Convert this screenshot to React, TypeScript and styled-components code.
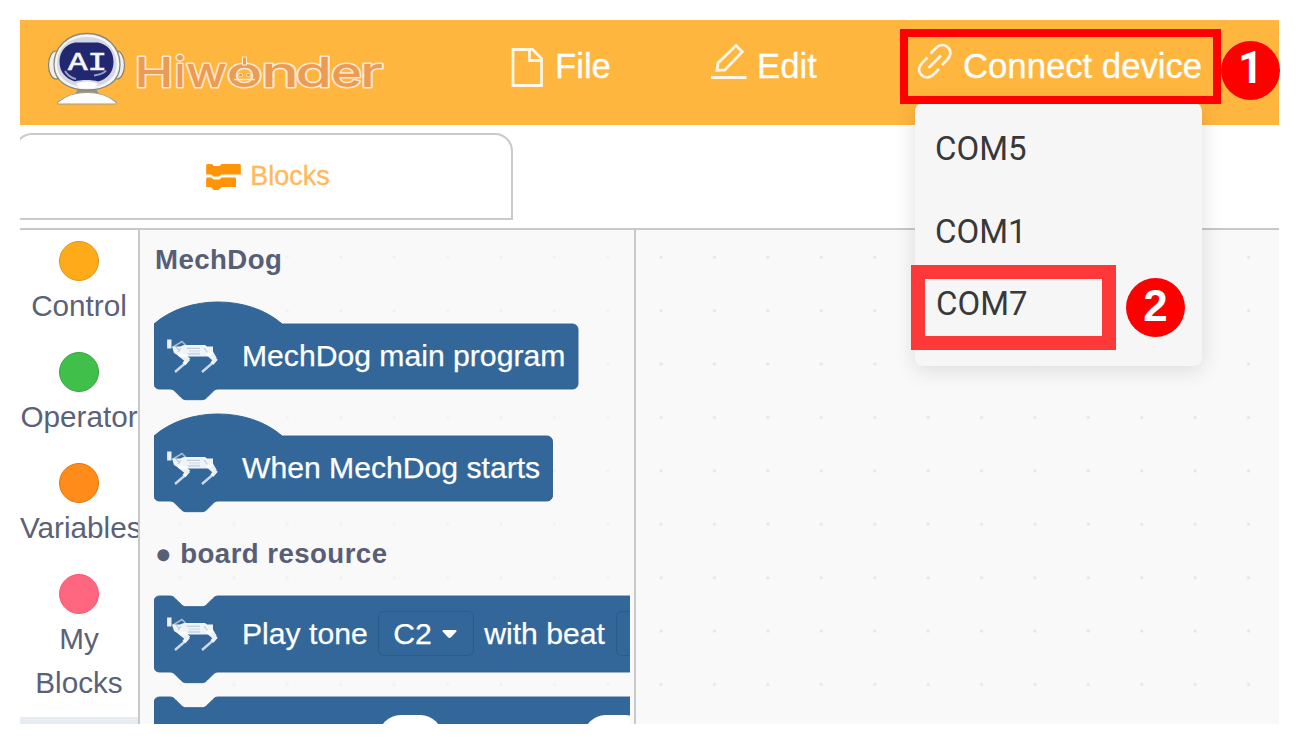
import React from 'react';
import styled, { createGlobalStyle } from 'styled-components';

const GlobalStyle = createGlobalStyle`
  *, *::before, *::after { box-sizing: border-box; }
  body { margin: 0; background: #fff; font-family: "Liberation Sans", Arial, sans-serif; }
`;

const Page = styled.div`
  width: 1301px;
  height: 744px;
  padding: 20px 22px 20px 20px;
  overflow: hidden;
`;

const Window = styled.div`
  position: relative;
  display: flex;
  flex-direction: column;
  width: 1259px;
  height: 704px;
  background: #fff;
`;

const Header = styled.header`
  display: flex;
  align-items: flex-start;
  height: 105px;
  flex: none;
  background: #ffb63f;
`;

const Logo = styled.svg`
  display: block;
  flex: none;
  width: 350px;
  height: 96px;
  margin-left: 25px;
`;

const Menu = styled.nav`
  display: flex;
  padding-top: 20px;
  margin-left: 113px;
`;

const MenuItem = styled.div<{ $width: number }>`
  display: flex;
  flex: none;
  width: ${p => p.$width}px;
  height: 54px;
  color: #fff;
  font-size: 34.7px;
  line-height: 52px;
  white-space: nowrap;
  -webkit-text-stroke: 0.3px #fff;
`;

const MenuIcon = styled.svg<{ $w: number }>`
  flex: none;
  width: ${p => p.$w}px;
  height: 54px;
`;

const TabBar = styled.div`
  height: 103px;
  flex: none;
  padding-top: 8px;
  overflow: hidden;
`;

const Tab = styled.div`
  display: flex;
  align-items: center;
  justify-content: center;
  gap: 9px;
  width: 499px;
  height: 87px;
  margin-left: -6px;
  padding-left: 9px;
  border: 2px solid #cacaca;
  border-radius: 18px 18px 0 0;
  color: #ffb95a;
  font-size: 27px;
  -webkit-text-stroke: 0.3px #ffb95a;
`;

const Body = styled.div`
  display: flex;
  flex: 1;
  min-height: 0;
  border-top: 2px solid #c8c8c8;
`;

const Sidebar = styled.aside`
  width: 120px;
  flex: none;
  overflow: hidden;
  border-right: 2px solid #c9c9c9;
`;

const Category = styled.div<{ $active?: boolean }>`
  display: flex;
  flex-direction: column;
  min-height: 111px;
  padding: 11px 0 13px;
  background: ${p => (p.$active ? '#e6ecf1' : 'transparent')};
`;

const Bubble = styled.span<{ $fill: string; $edge: string }>`
  width: 40px;
  height: 40px;
  margin: 0 auto 3px 39px;
  border: 1.5px solid ${p => p.$edge};
  border-radius: 50%;
  background: ${p => p.$fill};
`;

const CategoryName = styled.span`
  color: #5b6178;
  font-size: 29.7px;
  line-height: 43.5px;
  text-align: center;
`;

const Workspace = styled.main`
  position: relative;
  display: flex;
  flex: 1;
  min-width: 0;
  background: #f9f9f9;
`;

const Grid = styled.svg`
  position: absolute;
  inset: 0;
  width: 100%;
  height: 100%;
`;

const Flyout = styled.section`
  position: relative;
  width: 496px;
  flex: none;
  overflow: hidden;
  padding: 8px 4px 0 14px;
  border-right: 2px solid #c9c9c9;
`;

const FlyoutClip = styled.div`
  height: 100%;
  overflow: hidden;
`;

const Label = styled.h2<{ $gap: number }>`
  display: flex;
  margin: 0 0 ${p => p.$gap}px 1px;
  height: 44px;
  color: #575e75;
  font-size: 27.6px;
  line-height: 44px;
  letter-spacing: 0.45px;
  white-space: nowrap;
`;

const BlockRow = styled.div<{ $h: number; $gap: number }>`
  position: relative;
  display: flex;
  align-items: center;
  height: ${p => p.$h}px;
  margin-bottom: ${p => p.$gap}px;
  padding-left: 10px;
  color: #fff;
  font-size: 30.15px;
  white-space: nowrap;
  -webkit-text-stroke: 0.25px #fff;
`;

const BlockShape = styled.svg`
  position: absolute;
  left: 0;
  top: 0;
  overflow: visible;
`;

const BlockText = styled.span<{ $left: number }>`
  position: relative;
  margin-left: ${p => p.$left}px;
`;

const Dog = styled.svg`
  position: relative;
  flex: none;
  width: 56px;
  height: 36px;
`;

const Select = styled.span<{ $left: number }>`
  position: relative;
  display: flex;
  flex: none;
  align-items: center;
  gap: 10px;
  width: 96px;
  height: 45px;
  margin-left: ${p => p.$left}px;
  padding-left: 14px;
  border: 1.5px solid #2c5a89;
  border-radius: 6px;
`;

const Pill = styled.span<{ $left: number }>`
  position: relative;
  flex: none;
  width: 63px;
  height: 43px;
  margin-left: ${p => p.$left}px;
  border-radius: 22px;
  background: #fff;
`;

const Dropdown = styled.div`
  position: absolute;
  left: 895px;
  top: 83px;
  width: 287px;
  height: 263px;
  padding: 4px 0 0 20px;
  border-radius: 8px;
  background: #f6f6f6;
  box-shadow: 0 4px 22px rgba(0, 0, 0, 0.13);
`;

const Port = styled.div<{ $h: number; $shift?: number }>`
  height: ${p => p.$h}px;
  padding-left: ${p => p.$shift || 0}px;
  color: #383838;
  font-family: Roboto, "Liberation Sans", sans-serif;
  font-size: 33px;
  line-height: 84px;
`;

const Frame = styled.div<{ $x: number; $y: number; $w: number; $h: number; $b: number; $c: string }>`
  position: absolute;
  left: ${p => p.$x}px;
  top: ${p => p.$y}px;
  width: ${p => p.$w}px;
  height: ${p => p.$h}px;
  border: ${p => p.$b}px solid ${p => p.$c};
`;

const Badge = styled.div<{ $x: number; $y: number; $font?: string }>`
  position: absolute;
  left: ${p => p.$x}px;
  top: ${p => p.$y}px;
  width: 59px;
  height: 59px;
  border-radius: 50%;
  background: #f00;
  color: #fff;
  font-family: ${p => p.$font || '"Liberation Sans"'}, sans-serif;
  font-size: 44px;
  font-weight: bold;
  line-height: 55px;
  text-align: center;
`;

const S = 1.335;

const bottom = (h: number) =>
  `v ${h - 8} a 4 4 0 0 1 -4 4 H 48 c -2 0 -3 1 -4 2 l -4 4 c -1 1 -2 2 -4 2 h -12 c -2 0 -3 -1 -4 -2 l -4 -4 c -1 -1 -2 -2 -4 -2 H 4 a 4 4 0 0 1 -4 -4 z`;
const hatPath = (w: number, h: number) =>
  `M 0 0 c 25 -22 71 -22 96 0 H ${w - 4} a 4 4 0 0 1 4 4 ${bottom(h)}`;
const stackPath = (w: number, h: number) =>
  `M 0 4 A 4 4 0 0 1 4 0 H 12 c 2 0 3 1 4 2 l 4 4 c 1 1 2 2 4 2 h 12 c 2 0 3 -1 4 -2 l 4 -4 c 1 -1 2 -2 4 -2 H ${w - 4} a 4 4 0 0 1 4 4 ${bottom(h)}`;

function Block({ hat, width, height, gap, children }: {
  hat?: boolean; width: number; height: number; gap: number; children: React.ReactNode;
}) {
  const w = width / S;
  const h = height / S;
  return (
    <BlockRow $h={height} $gap={gap}>
      <BlockShape width={width} height={height}>
        <path
          transform={`scale(${S})`}
          d={hat ? hatPath(w, h) : stackPath(w, h)}
          fill="#336799"
          stroke="#2f6090"
          strokeWidth="0.7"
        />
      </BlockShape>
      {children}
    </BlockRow>
  );
}

function DogIcon() {
  return (
    <Dog viewBox="0 0 56 36" fill="none" stroke="#fff">
      <path d="M5.300 1.500v9" strokeWidth="4.400" opacity=".9" />
      <path d="M9 9l9-5.500 4 4" strokeWidth="1.600" opacity=".55" />
      <path d="M8 8.500h8l4-1.500h21l2 1.500h6v6l-3 4H21l-4 1-7-4.500z" fill="#fff" stroke="none" opacity=".93" />
      <path d="M23 10.200h13M24 16h12" stroke="#aec4d8" strokeWidth="1.100" />
      <path d="M25 13.200h11" stroke="#dde7f0" strokeWidth="2.400" />
      <path d="M12 9l4 4M17 10l-3 4M40 10l4 5" stroke="#b9ccdd" strokeWidth="1.100" />
      <path d="M15 16l8 6.500-3 3.500M19 17l6 5" strokeWidth="4" opacity=".9" />
      <path d="M43 15l8 7-3 3.500M47 14l4 7" strokeWidth="4" opacity=".9" />
      <path d="M22 24.500L11 34M49 24.500L38 34" strokeWidth="2.400" opacity=".75" />
    </Dog>
  );
}

const letters: [string, number, number][] = [
  ['H', 89.5, 39], ['i', 129.5, 11], ['w', 141, 41], ['o', 181.5, 36],
  ['n', 216, 38], ['d', 250.5, 36.5], ['e', 286, 31], ['r', 315, 23],
];

function BrandLogo() {
  return (
    <Logo viewBox="45 20 350 96">
      <ellipse cx="56" cy="65" rx="7.5" ry="14" fill="#eceef0" stroke="#8b8068" strokeWidth="1.2" />
      <ellipse cx="117" cy="65" rx="7.5" ry="14" fill="#eceef0" stroke="#8b8068" strokeWidth="1.2" />
      <path d="M77 87h20v4l3 4H74l3-4z" fill="#91948f" />
      <path d="M58 102c7-6 15-9.500 29-9.500s22 3.500 29 9.500c1 1 .5 2-1 2H59c-1.500 0-2-1-1-2z" fill="#fff" stroke="#a89c80" strokeWidth="1.1" />
      <path d="M87 33.500c19 0 33 13 33 31S105 90 87 90 54 82 54 64.500s14-31 33-31z" fill="#f4f5f7" stroke="#8b8577" strokeWidth="1.3" />
      <path d="M86.500 37c17 0 30 11 30 27S103 87 86.500 87 57 79 57 63.500 70 37 86.500 37z" fill="#d5d8e4" />
      <path d="M75 42.500h23c10 2 15.500 9 15.500 19.500S107 79 98 81.500c-5-2-18-2-23 0C66 79 59.500 72 59.500 62S65 44.500 75 42.500z" fill="#22286f" />
      <path d="M65 71c3 5 6 7 11 8M94 75.500c6-1 10-2 12-5" stroke="#9a9fca" strokeWidth="2" fill="none" />
      <path d="M76 84c5-3.500 17-3.500 22 0l-4 4H80z" fill="#fff" />
      <text x="68" y="69.500" fill="#f4f5ff" fontFamily="Liberation Mono, monospace" fontSize="26" stroke="#f4f5ff" strokeWidth=".7" textLength="39" lengthAdjust="spacingAndGlyphs">AI</text>
      <g
        transform="translate(45 0)"
        fontFamily="Inter, sans-serif"
        fontWeight="500"
        fontSize="41"
        fill="#ec9c52"
        stroke="#ffe9d2"
        strokeWidth="2.8"
        paintOrder="stroke"
        strokeLinejoin="round"
      >
        <text y="86.5">
          {letters.map(([c, x, w]) => (
            <tspan key={c + x} x={x} textLength={w} lengthAdjust="spacingAndGlyphs">{c}</tspan>
          ))}
        </text>
        <path d="M198 57.500h3v7h-3z" strokeWidth="2" />
        <path d="M189 79.500h21" stroke="#ffe9d2" strokeWidth="1.500" />
        <circle cx="195.500" cy="75" r="1.600" strokeWidth="1.500" />
        <circle cx="203.500" cy="75" r="1.600" strokeWidth="1.500" />
      </g>
    </Logo>
  );
}

const categories = [
  { name: 'Control', fill: '#ffab19', edge: '#dc951c' },
  { name: 'Operator', fill: '#40bf4a', edge: '#3aa442' },
  { name: 'Variables', fill: '#ff8c1a', edge: '#e2780e' },
  { name: 'My Blocks', fill: '#ff6680', edge: '#ff5672' },
];

export default function App() {
  return (
    <Page>
      <GlobalStyle />
      <Window>
        <Header>
          <BrandLogo />
          <Menu>
            <MenuItem $width={200}>
              <MenuIcon $w={47} viewBox="0 0 47 54" fill="none" stroke="#fff6e6">
                <path d="M5 9.500h19.500l9 9v27H5zM21.500 9.500v11h12" strokeWidth="2.800" />
              </MenuIcon>
              File
            </MenuItem>
            <MenuItem $width={206}>
              <MenuIcon $w={49} viewBox="0 0 49 54" fill="none" stroke="#fff6e6">
                <path d="M3 37.500h35.500" strokeWidth="3.200" />
                <path d="M9 30.500l1-7.500L28 5.500l6.200 6.200L17 30l-8 .5z" strokeWidth="2.800" />
              </MenuIcon>
              Edit
            </MenuItem>
            <MenuItem $width={300}>
              <MenuIcon $w={49} viewBox="-1.500 0 49 54" fill="none" stroke="#fff6e6" strokeWidth="2.700">
                <path d="M15 13.500l5-5c4-4 9-4.500 12.500-1s3 8.500-1 12.500l-5 5M12 17.500l-5 5c-4 4-4.500 9-1 12.500s8.500 3 12.500-1l5-5M13 28L25.500 15.500" />
              </MenuIcon>
              Connect device
            </MenuItem>
          </Menu>
        </Header>

        <TabBar>
          <Tab>
            <svg width="35" height="26" viewBox="0 0 36 27" fill="#ff9408">
              <path d="M1 0h5l2 2h6l2-2h19l1 1v10H16l-3 2H8l-3-2H0V1z" />
              <path d="M1 14h4l3 2h6l2-2h14l1 1v9H16l-3 3H8l-3-3H0V15z" />
            </svg>
            <span>Blocks</span>
          </Tab>
        </TabBar>

        <Body>
          <Sidebar>
            {categories.map(c => (
              <Category key={c.name}>
                <Bubble $fill={c.fill} $edge={c.edge} />
                <CategoryName>{c.name}</CategoryName>
              </Category>
            ))}
            <Category $active />
          </Sidebar>

          <Workspace>
            <Grid>
              <defs>
                <pattern id="dots" width="53.4" height="53.4" x="13.8" y="0.6" patternUnits="userSpaceOnUse">
                  <path d="M25.200 26.700h3M26.700 25.200v3" stroke="#e2e2e2" strokeWidth="1.5" />
                </pattern>
                <pattern id="faint" width="53.4" height="53.4" x="13.8" y="0.6" patternUnits="userSpaceOnUse">
                  <path d="M25.200 26.700h3M26.700 25.200v3" stroke="#f0f0f0" strokeWidth="1.5" />
                </pattern>
              </defs>
              <rect width="495" height="100%" fill="url(#faint)" />
              <rect x="496" width="650" height="100%" fill="url(#dots)" />
            </Grid>
            <Flyout>
              <FlyoutClip>
                <Label $gap={41.500}>MechDog</Label>
                <Block hat width={424} height={65} gap={47}>
                  <DogIcon />
                  <BlockText $left={22}>MechDog main program</BlockText>
                </Block>
                <Block hat width={398.500} height={65} gap={31}>
                  <DogIcon />
                  <BlockText $left={22}>When MechDog starts</BlockText>
                </Block>
                <Label $gap={20}>● board resource</Label>
                <Block width={640} height={76} gap={25.500}>
                  <DogIcon />
                  <BlockText $left={22}>Play tone</BlockText>
                  <Select $left={10.500}>
                    C2
                    <svg width="15" height="10" viewBox="0 0 15 10" fill="#fff">
                      <path d="M1.500 1h12c1 0 1.300 1 .7 1.700L9 8.300c-1 .9-2 .9-3 0L.8 2.700C.2 2 .5 1 1.500 1z" />
                    </svg>
                  </Select>
                  <BlockText $left={10}>with beat</BlockText>
                  <Select $left={11} />
                </Block>
                <Block width={640} height={78} gap={0}>
                  <Pill $left={215} />
                  <Pill $left={142} />
                </Block>
              </FlyoutClip>
            </Flyout>
          </Workspace>
        </Body>

        <Dropdown>
          <Port $h={83}>COM5</Port>
          <Port $h={72}>COM1</Port>
          <Port $h={83} $shift={1}>COM7</Port>
        </Dropdown>
        <Frame $x={880} $y={9} $w={321} $h={75} $b={8} $c="#ff0000" />
        <Frame $x={891.400} $y={245} $w={205} $h={85} $b={14} $c="#fc3838" />
        <Badge $x={1201} $y={20.500} $font="Roboto">1</Badge>
        <Badge $x={1106} $y={258}>2</Badge>
      </Window>
    </Page>
  );
}
